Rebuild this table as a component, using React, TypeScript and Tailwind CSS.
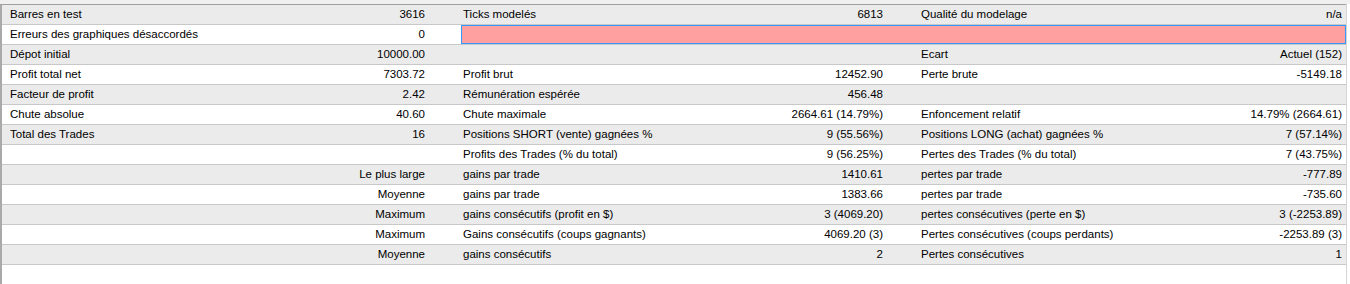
import React from 'react';

type Row = [string, string, string, string, string, string];

const rows: Row[] = [
  ['Barres en test', '3616', 'Ticks modelés', '6813', 'Qualité du modelage', 'n/a'],
  ['Erreurs des graphiques désaccordés', '0', '', '', '', ''],
  ['Dépot initial', '10000.00', '', '', 'Ecart', 'Actuel (152)'],
  ['Profit total net', '7303.72', 'Profit brut', '12452.90', 'Perte brute', '-5149.18'],
  ['Facteur de profit', '2.42', 'Rémunération espérée', '456.48', '', ''],
  ['Chute absolue', '40.60', 'Chute maximale', '2664.61 (14.79%)', 'Enfoncement relatif', '14.79% (2664.61)'],
  ['Total des Trades', '16', 'Positions SHORT (vente) gagnées %', '9 (55.56%)', 'Positions LONG (achat) gagnées %', '7 (57.14%)'],
  ['', '', 'Profits des Trades (% du total)', '9 (56.25%)', 'Pertes des Trades (% du total)', '7 (43.75%)'],
  ['', 'Le plus large', 'gains par trade', '1410.61', 'pertes par trade', '-777.89'],
  ['', 'Moyenne', 'gains par trade', '1383.66', 'pertes par trade', '-735.60'],
  ['', 'Maximum', 'gains consécutifs (profit en $)', '3 (4069.20)', 'pertes consécutives (perte en $)', '3 (-2253.89)'],
  ['', 'Maximum', 'Gains consécutifs (coups gagnants)', '4069.20 (3)', 'Pertes consécutives (coups perdants)', '-2253.89 (3)'],
  ['', 'Moyenne', 'gains consécutifs', '2', 'Pertes consécutives', '1'],
];

function ReportRow({ row, index }: { row: Row; index: number }) {
  const bg = index % 2 === 0 ? 'bg-[#ebebeb]' : 'bg-white';
  const pink = index === 1;

  return (
    <div className={`flex h-5 border-b border-[#c8c8c8] ${bg}`}>
      {/* group 1 */}
      <div className="flex w-[459px] items-center">
        <span className="flex-1 truncate pl-[8px]">{row[0]}</span>
        <span className="pr-[36px] text-right">{row[1]}</span>
      </div>

      {pink ? (
        <div className="w-[885px] border border-[#3399ff] bg-[#ffa0a0]" />
      ) : (
        <>
          {/* group 2 */}
          <div className="flex w-[458px] items-center">
            <span className="flex-1 pl-[2px]">{row[2]}</span>
            <span className="pr-[36px] text-right">{row[3]}</span>
          </div>
          {/* group 3 */}
          <div className="flex w-[427px] items-center">
            <span className="flex-1 pl-[2px]">{row[4]}</span>
            <span className="pr-[4px] text-right">{row[5]}</span>
          </div>
        </>
      )}
    </div>
  );
}

export default function App() {
  return (
    <div className="h-[284px] w-[1350px] overflow-hidden bg-white font-['Liberation_Sans',Arial,sans-serif] text-[11.5px] leading-none text-black">
      <div className="h-1 bg-[#f0f0f0]" />
      <div className="flex h-[280px]">
        <div className="w-[1346px] border-t border-l-2 border-t-[#a0a0a0] border-l-[#a9a9a9] bg-white">
          {rows.map((row, i) => (
            <ReportRow key={i} row={row} index={i} />
          ))}
        </div>
        <div className="w-px bg-[#d4d4d4]" />
        <div className="flex-1 bg-white" />
      </div>
    </div>
  );
}
